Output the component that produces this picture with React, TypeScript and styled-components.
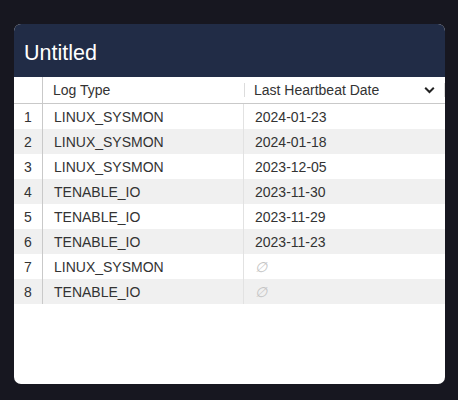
import React from "react";
import styled, { createGlobalStyle } from "styled-components";

const Global = createGlobalStyle`
  html, body { margin: 0; padding: 0; background: #171720; }
  body { font-family: "Liberation Sans", Arial, sans-serif; }
`;

const Page = styled.div`
  padding: 24px 13px 16px 14px;
`;

const Card = styled.div`
  width: 431px;
  height: 360px;
  background: #ffffff;
  border-radius: 7px;
  overflow: hidden;
  display: flex;
  flex-direction: column;
`;

const Header = styled.div`
  height: 53px;
  background: #212c46;
  display: flex;
  align-items: center;
  padding: 5px 10px 0;
  box-sizing: border-box;
`;

const Title = styled.h1`
  margin: 0;
  font-size: 21.5px;
  font-weight: 400;
  color: #ffffff;
`;

const Grid = styled.div`
  display: grid;
  grid-template-columns: 29px 201px 1fr;
`;

const HeadCell = styled.div<{ $first?: boolean }>`
  height: 26px;
  border-bottom: 1px solid #c9c9c9;
  border-right: ${(p) => (p.$first ? "1px solid #c9c9c9" : "none")};
  display: flex;
  align-items: center;
  padding-left: ${(p) => (p.$first ? "0" : "10px")};
  font-size: 14px;
  color: #333;
  position: relative;
`;

const HeadSep = styled.span<{ $right?: boolean }>`
  position: absolute;
  top: 6px;
  height: 14px;
  width: 1px;
  background: #dcdcdc;
  ${(p) => (p.$right ? "right: 0;" : "left: 0;")}
`;

const Chevron = styled.svg`
  position: absolute;
  right: 10px;
  top: 8px;
`;

const Cell = styled.div<{ $alt: boolean; $num?: boolean; $sep?: boolean; $null?: boolean }>`
  height: 25px;
  display: flex;
  align-items: center;
  font-size: 14px;
  color: ${(p) => (p.$null ? "#c4c4c4" : "#333")};
  background: ${(p) => (p.$alt ? "#f0f0f0" : "#ffffff")};
  justify-content: ${(p) => (p.$num ? "center" : "flex-start")};
  padding-left: ${(p) => (p.$num ? "0" : "11px")};
  border-right: ${(p) =>
    p.$num ? "1px solid #c9c9c9" : p.$sep ? "1px solid #e2e2e2" : "none"};
  font-style: ${(p) => (p.$null ? "italic" : "normal")};
`;

const rows: [string, string | null][] = [
  ["LINUX_SYSMON", "2024-01-23"],
  ["LINUX_SYSMON", "2024-01-18"],
  ["LINUX_SYSMON", "2023-12-05"],
  ["TENABLE_IO", "2023-11-30"],
  ["TENABLE_IO", "2023-11-29"],
  ["TENABLE_IO", "2023-11-23"],
  ["LINUX_SYSMON", null],
  ["TENABLE_IO", null],
];

export default function App() {
  return (
    <Page>
      <Global />
      <Card>
        <Header>
          <Title>Untitled</Title>
        </Header>
        <Grid>
          <HeadCell $first />
          <HeadCell>Log Type</HeadCell>
          <HeadCell>
            <HeadSep />
            Last Heartbeat Date
            <Chevron width="11" height="10" viewBox="0 0 11 10">
              <path d="M1.2 2.8 L5.5 7 L9.8 2.8" fill="none" stroke="#222" strokeWidth="2" />
            </Chevron>
            <HeadSep $right />
          </HeadCell>
          {rows.map(([t, d], i) => {
            const alt = i % 2 === 1;
            return (
              <React.Fragment key={i}>
                <Cell $alt={alt} $num>{i + 1}</Cell>
                <Cell $alt={alt} $sep>{t}</Cell>
                <Cell $alt={alt} $null={d === null}>{d ?? "∅"}</Cell>
              </React.Fragment>
            );
          })}
        </Grid>
      </Card>
    </Page>
  );
}
